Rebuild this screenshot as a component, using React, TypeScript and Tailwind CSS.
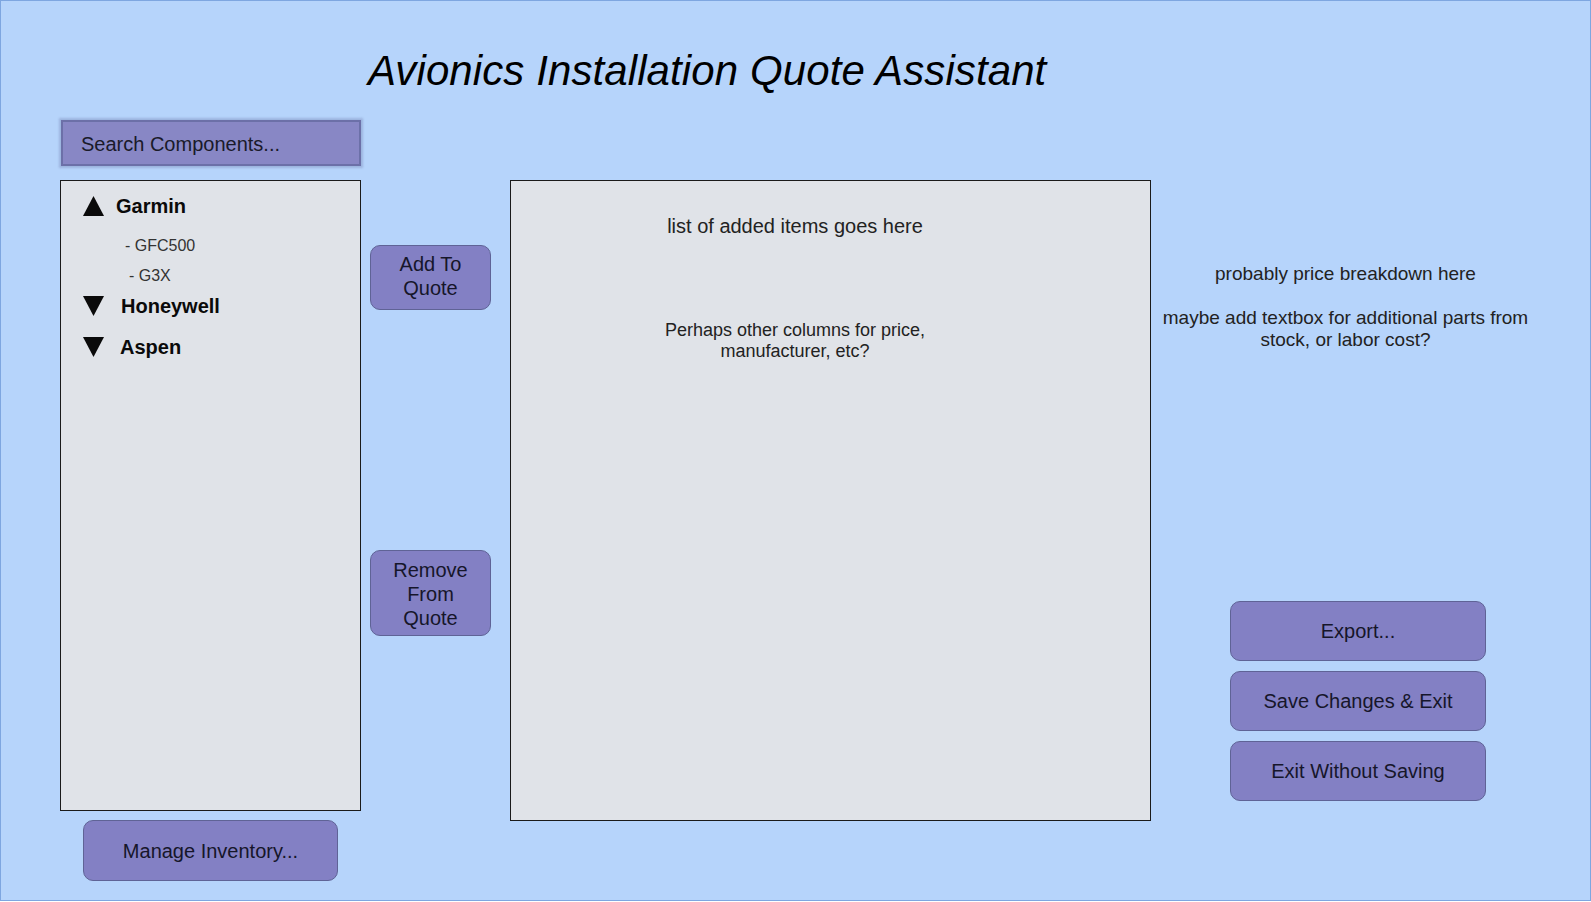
import React from "react";

const font = "font-['Liberation_Sans',Arial,sans-serif]";

function Triangle({ up }: { up?: boolean }) {
  return (
    <svg width="21" height="20" viewBox="0 0 21 20" className="shrink-0">
      <polygon points={up ? "10.5,0 21,20 0,20" : "0,0 21,0 10.5,20"} fill="#0a0a0a" />
    </svg>
  );
}

function PurpleButton({ className, children }: { className: string; children: React.ReactNode }) {
  return (
    <button
      className={`flex flex-col items-center justify-center rounded-[10px] border border-[#5f6396] bg-[#8380c4] text-[20px] leading-[24px] text-[#16162a] ${className}`}
    >
      {children}
    </button>
  );
}

export default function App() {
  return (
    <div className={`h-[902px] w-[1591px] bg-white ${font}`}>
      <div className="h-[901px] w-[1591px] border border-[#7ea6e0] bg-[#b6d4fb]">
        {/* Title */}
        <h1 className="ml-[367px] mt-[46px] h-[48px] text-[42px] leading-[48px] tracking-[0.1px] italic text-black">
          Avionics Installation Quote Assistant
        </h1>

        <div className="mt-[25px] flex items-start">
          {/* Left column: search, tree, inventory */}
          <div className="ml-[59px] flex w-[301px] flex-col">
            <div className="ml-[1px] flex h-[46px] w-[300px] items-center border-2 border-[#6c70a8] bg-[#8887c5] pl-[18px] pt-[2px] text-[20px] leading-[24px] text-[#1a1a2a] shadow-[0_0_2px_2px_rgba(110,120,170,0.35)]">
              Search Components...
            </div>

            <div className="mt-[14px] h-[631px] w-[301px] border border-[#1a1a1a] bg-[#e0e3e8]">
              <div className="mt-[13px] flex h-[24px] items-center pl-[22px]">
                <Triangle up />
                <span className="ml-[12px] text-[20px] font-bold leading-[24px] text-[#0a0a0a]">Garmin</span>
              </div>
              <div className="mt-[18px] pl-[64px] text-[16px] leading-[20px] text-[#333]">- GFC500</div>
              <div className="mt-[10px] pl-[68px] text-[16px] leading-[20px] text-[#333]">- G3X</div>
              <div className="mt-[8px] flex h-[24px] items-center pl-[22px]">
                <Triangle />
                <span className="ml-[17px] text-[20px] font-bold leading-[24px] text-[#0a0a0a]">Honeywell</span>
              </div>
              <div className="mt-[17px] flex h-[24px] items-center pl-[22px]">
                <Triangle />
                <span className="ml-[16px] text-[20px] font-bold leading-[24px] text-[#0a0a0a]">Aspen</span>
              </div>
            </div>

            <PurpleButton className="ml-[23px] mt-[9px] h-[61px] w-[255px]">Manage Inventory...</PurpleButton>
          </div>

          {/* Middle column: add / remove */}
          <div className="ml-[9px] flex w-[121px] flex-col">
            <PurpleButton className="mt-[125px] h-[65px] w-[121px] pb-[4px]">
              <span>Add To</span>
              <span>Quote</span>
            </PurpleButton>
            <PurpleButton className="mt-[240px] h-[86px] w-[121px] pt-[2px]">
              <span>Remove</span>
              <span>From</span>
              <span>Quote</span>
            </PurpleButton>
          </div>

          {/* Quote list */}
          <div className="ml-[19px] mt-[60px] h-[641px] w-[641px] border border-[#1a1a1a] bg-[#e0e3e8] text-[#222]">
            <div className="w-[568px] pt-[33px] text-center text-[20px] leading-[24px]">list of added items goes here</div>
            <div className="mt-[82px] w-[568px] text-center text-[18px] leading-[21px]">
              Perhaps other columns for price,
              <br />
              manufacturer, etc?
            </div>
          </div>

          {/* Right column: notes + actions */}
          <div className="flex w-[389px] flex-col">
            <div className="mt-[143px] text-center text-[19px] leading-[22px] text-[#222]">
              probably price breakdown here
              <br />
              <br />
              maybe add textbox for additional parts from
              <br />
              stock, or labor cost?
            </div>
            <div className="ml-[79px] mt-[250px] flex flex-col gap-[10px]">
              <PurpleButton className="h-[60px] w-[256px]">Export...</PurpleButton>
              <PurpleButton className="h-[60px] w-[256px]">Save Changes &amp; Exit</PurpleButton>
              <PurpleButton className="h-[60px] w-[256px]">Exit Without Saving</PurpleButton>
            </div>
          </div>
        </div>
      </div>
    </div>
  );
}
